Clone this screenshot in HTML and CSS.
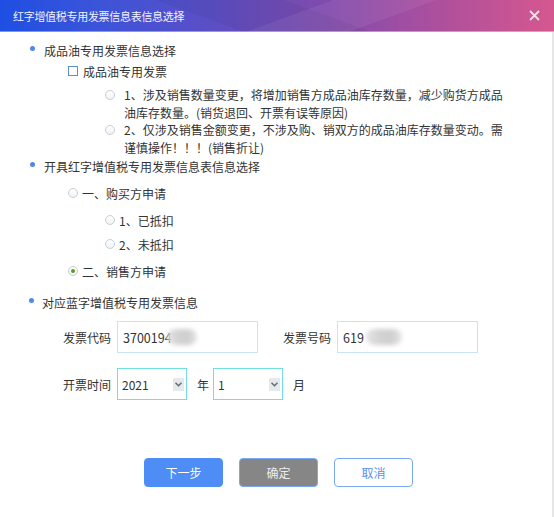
FILE: index.html
```html
<!DOCTYPE html>
<html lang="zh-CN">
<head>
    <meta charset="UTF-8">
    <title>红字增值税专用发票信息表信息选择</title>
    <link rel="stylesheet" href="styles.css">
</head>
<body>
    <div class="dialog">
        <div class="titlebar">
            <span class="title">红字增值税专用发票信息表信息选择</span>
            <svg class="close" width="11" height="11" viewBox="0 0 11 11">
                <path d="M1 1 L10 10 M10 1 L1 10" stroke="rgba(255,255,255,0.8)" stroke-width="1.8" fill="none"/>
            </svg>
        </div>

        <div class="content">
            <div class="group-title"><span class="dot"></span>成品油专用发票信息选择</div>

            <div class="check-row"><span class="checkbox"></span>成品油专用发票</div>

            <div class="option">
                <span class="radio"></span>
                <span class="option-text">1、涉及销售数量变更，将增加销售方成品油库存数量，减少购货方成品<br>油库存数量。(销货退回、开票有误等原因)</span>
            </div>
            <div class="option">
                <span class="radio"></span>
                <span class="option-text">2、仅涉及销售金额变更，不涉及购、销双方的成品油库存数量变动。需<br>谨慎操作！！！(销售折让)</span>
            </div>

            <div class="group-title"><span class="dot"></span>开具红字增值税专用发票信息表信息选择</div>

            <div class="radio-row first"><span class="radio"></span>一、购买方申请</div>
            <div class="sub-list">
                <div class="radio-row sub"><span class="radio"></span>1、已抵扣</div>
                <div class="radio-row sub"><span class="radio"></span>2、未抵扣</div>
            </div>
            <div class="radio-row"><span class="radio checked"></span>二、销售方申请</div>

            <div class="group-title last"><span class="dot"></span>对应蓝字增值税专用发票信息</div>

            <div class="field-row">
                <span class="label">发票代码</span>
                <div class="input">3700194<span class="blur b1"></span></div>
                <span class="label second">发票号码</span>
                <div class="input">619<span class="blur b2"></span></div>
            </div>

            <div class="field-row dates">
                <span class="label">开票时间</span>
                <div class="select">2021<span class="arrow"><svg width="7" height="5" viewBox="0 0 7 5"><path d="M0.5 0.8 L3.5 3.8 L6.5 0.8" stroke="#666" stroke-width="1.3" fill="none"/></svg></span></div>
                <span class="unit">年</span>
                <div class="select">1<span class="arrow"><svg width="7" height="5" viewBox="0 0 7 5"><path d="M0.5 0.8 L3.5 3.8 L6.5 0.8" stroke="#666" stroke-width="1.3" fill="none"/></svg></span></div>
                <span class="unit">月</span>
            </div>

            <div class="buttons">
                <button class="btn btn-primary">下一步</button>
                <button class="btn btn-grey">确定</button>
                <button class="btn btn-outline">取消</button>
            </div>
        </div>
    </div>
</body>
</html>
```

FILE: styles.css
```css
* {
    margin: 0;
    padding: 0;
    box-sizing: border-box;
}

body {
    font-family: "Noto Sans CJK SC", "Noto Sans", sans-serif;
    font-size: 12px;
    color: #333;
    background: #fff;
    width: 554px;
    height: 517px;
    overflow: hidden;
}

.dialog {
    width: 554px;
    height: 517px;
    display: flex;
    flex-direction: column;
}

.titlebar {
    height: 32px;
    flex-shrink: 0;
    display: flex;
    align-items: center;
    justify-content: space-between;
    padding: 0 14px 1px 13px;
    background:
        linear-gradient(160deg, transparent 0 52%, rgba(255, 255, 255, 0.06) 52% 68%, transparent 68%),
        linear-gradient(20deg, transparent 0 38%, rgba(0, 0, 0, 0.05) 38% 58%, transparent 58%),
        linear-gradient(90deg, #1e4fe3 0%, #3c54d8 18%, #5b4fc6 38%, #7e4bae 58%, #ab4f9e 78%, #d6578e 100%);
    box-shadow: inset 0 -1px rgba(255, 255, 255, 0.4);
}

.title {
    color: #f2f2ff;
    font-size: 11px;
    letter-spacing: -0.3px;
}

.content {
    flex: 1;
    padding-top: 8px;
    border-right: 2px solid #e6e6e6;
}

.group-title {
    display: flex;
    align-items: center;
    height: 20px;
    padding-left: 30px;
    gap: 9px;
}

.group-title.last {
    margin-top: 11px;
    padding-left: 29px;
    gap: 8px;
}

.dot {
    width: 5px;
    height: 5px;
    border-radius: 50%;
    background: #4f86ef;
    margin-top: -4px;
}

.check-row {
    display: flex;
    align-items: center;
    height: 20px;
    margin-top: 1px;
    padding-left: 68px;
    gap: 5px;
}

.checkbox {
    width: 10px;
    height: 10px;
    border: 1px solid #5d8fc4;
    background: #fff;
}

.option {
    display: flex;
    align-items: flex-start;
    padding-left: 105px;
    gap: 9px;
    line-height: 17.5px;
}

.check-row + .option {
    margin-top: 5px;
}

.option .radio {
    margin-top: 4px;
}

.radio {
    width: 10px;
    height: 10px;
    flex-shrink: 0;
    border-radius: 50%;
    border: 1px solid #c6ced8;
    background: linear-gradient(#fff, #f1f3f6);
    display: flex;
    align-items: center;
    justify-content: center;
}

.radio.checked::after {
    content: "";
    width: 4px;
    height: 4px;
    border-radius: 50%;
    background: #5f9b1c;
}

.radio-row {
    display: flex;
    align-items: center;
    height: 20px;
    padding-left: 68px;
    gap: 4px;
}

.radio-row.first {
    margin-top: 7px;
}

.sub-list {
    display: flex;
    flex-direction: column;
    gap: 4px;
    margin: 7px 0;
}

.radio-row.sub {
    padding-left: 105px;
}

.field-row {
    display: flex;
    align-items: center;
    height: 32px;
    margin-top: 9px;
    padding-left: 63px;
}

.field-row.dates {
    margin-top: 15px;
}

.label {
    width: 54px;
}

.label.second {
    margin-left: 25px;
}

.input {
    width: 141px;
    height: 32px;
    border: 1px solid #c8e5f6;
    padding-left: 5px;
    display: flex;
    align-items: center;
    font-size: 12.5px;
}

.blur {
    display: inline-block;
    height: 16px;
    border-radius: 8px;
    background: linear-gradient(90deg, #e4e4e4, #d2d2d2 40%, #cfcfcf 70%, #e6e6e6);
    filter: blur(2px);
}

.blur.b1 {
    width: 30px;
    margin-left: -5px;
}

.blur.b2 {
    width: 36px;
    margin-left: 2px;
}

.select {
    width: 70px;
    height: 32px;
    border: 1px solid #74dfe0;
    padding: 0 2px 0 4px;
    display: flex;
    align-items: center;
    justify-content: space-between;
}

.arrow {
    width: 11px;
    height: 13px;
    background: #e4e9ef;
    display: flex;
    align-items: center;
    justify-content: center;
}

.unit {
    margin: 0 4px 0 10px;
}

.buttons {
    display: flex;
    gap: 16px;
    margin-top: 58px;
    padding-left: 144px;
}

.btn {
    width: 79px;
    height: 29px;
    border-radius: 4px;
    font-family: inherit;
    font-size: 12px;
    cursor: pointer;
}

.btn-primary {
    background: #4e8cf6;
    border: 1px solid #4e8cf6;
    color: #fff;
}

.btn-grey {
    background: #868686;
    border: 1px solid #7ba6f2;
    color: #ececec;
}

.btn-outline {
    background: #fff;
    border: 1px solid #7ba8f5;
    color: #5a8ef2;
}
```
